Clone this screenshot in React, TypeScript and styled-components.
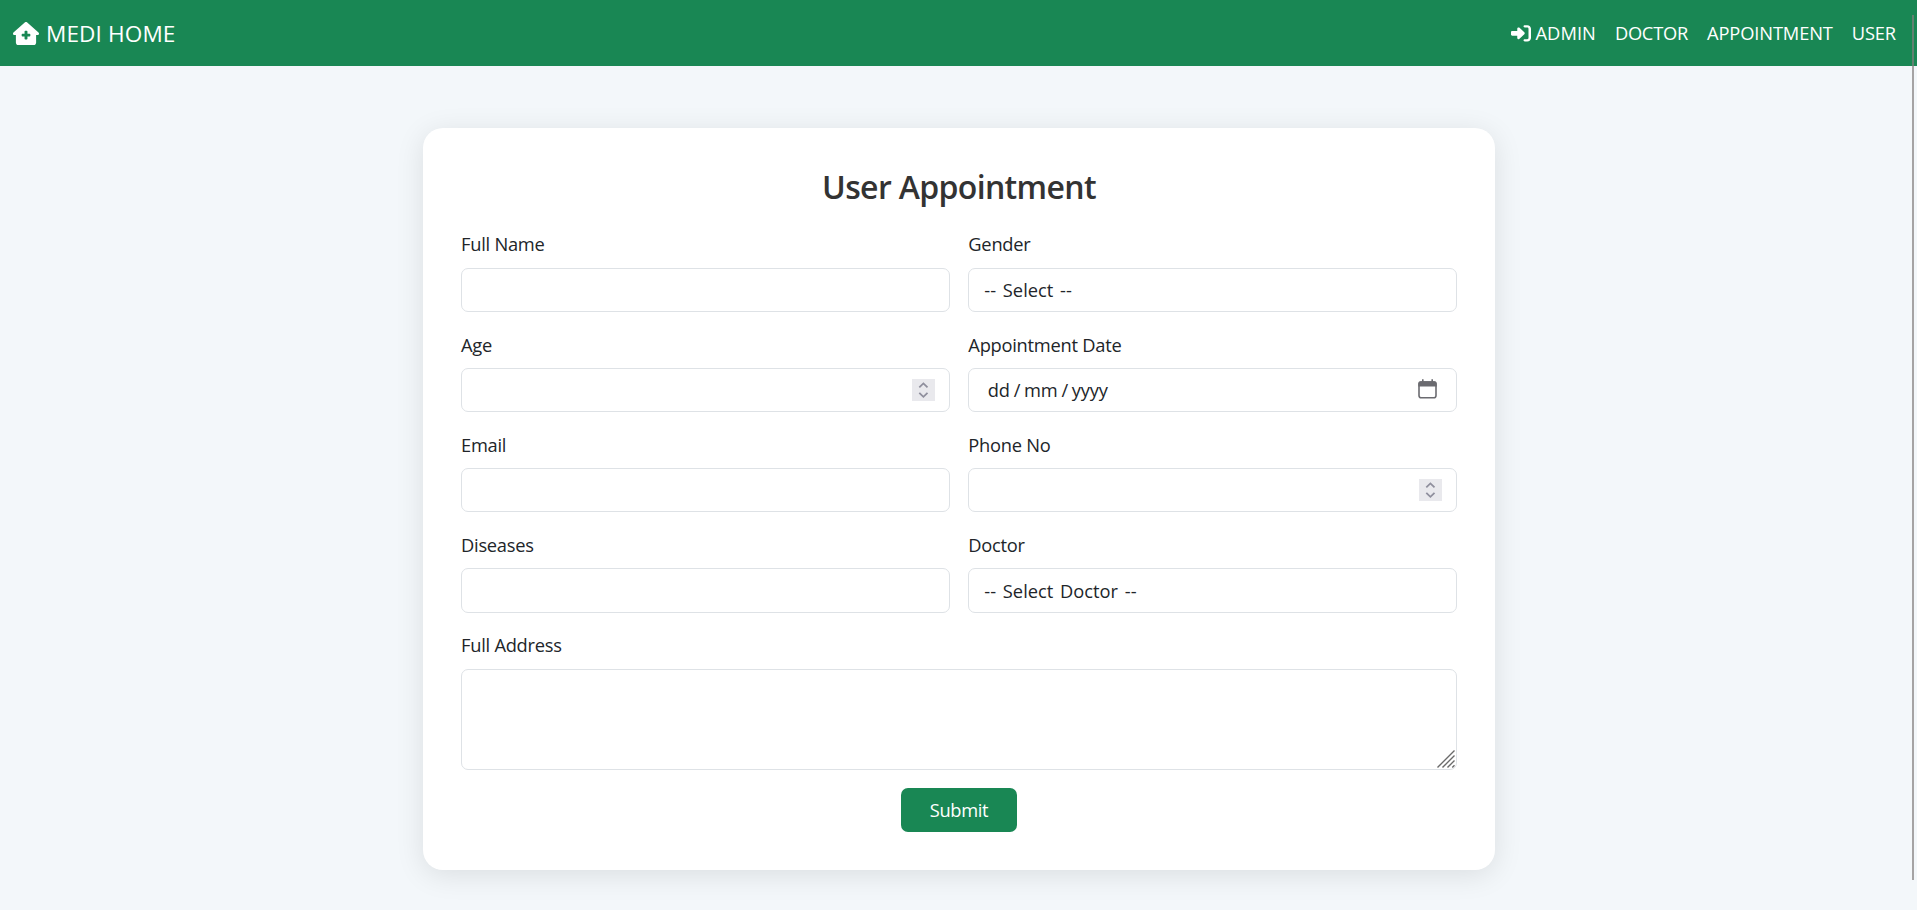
import React from "react";
import styled, { createGlobalStyle } from "styled-components";
import { FaHouseMedical, FaRightToBracket } from "react-icons/fa6";

const GlobalStyle = createGlobalStyle`
  *, *::before, *::after { box-sizing: border-box; }
  html, body { margin: 0; padding: 0; height: 910px; overflow: hidden; }
  body {
    background: #f3f7fa;
    color: #212529;
    font-family: "Open Sans", "Noto Sans", sans-serif;
    font-size: 18.3px;
    line-height: 28px;
  }
`;

const Page = styled.div`
  height: 910px;
  display: flex;
  flex-direction: column;
`;

const Navbar = styled.nav`
  width: 100%;
  height: 66px;
  flex: none;
  display: flex;
  align-items: center;
  justify-content: space-between;
  padding: 0 21px 0 13px;
  background: #198754;
  color: #fff;
`;

const Brand = styled.a`
  display: flex;
  align-items: center;
  gap: 7px;
  padding-top: 1px;
  font-size: 22.6px;
  letter-spacing: 0.1px;
  svg { width: 26px; height: 23.3px; }
`;

const NavLinks = styled.div`
  display: flex;
  gap: 19px;
`;

const NavLink = styled.a<{ $spacing: number }>`
  display: flex;
  align-items: center;
  gap: 5px;
  letter-spacing: ${(p) => p.$spacing}px;
  svg { width: 20px; height: 18.7px; }
`;

const Card = styled.main`
  width: 1072px;
  height: 742px;
  margin: 62px 0 0 423px;
  padding: 37px 38px;
  display: flex;
  flex-direction: column;
  align-items: center;
  background: #fff;
  border-radius: 20px;
  box-shadow: 0 5px 29px rgba(0, 0, 0, 0.1);
`;

const Title = styled.h2`
  margin: 0 0 22.2px;
  font-size: 32px;
  line-height: 43px;
  font-weight: 600;
  letter-spacing: -0.65px;
  color: #333;
`;

const FormGrid = styled.form`
  width: 100%;
  display: grid;
  grid-template-columns: 1fr 1fr;
  gap: 18.67px;
`;

const Field = styled.div<{ $wide?: boolean }>`
  grid-column: ${(p) => (p.$wide ? "1 / -1" : "auto")};
  display: flex;
  flex-direction: column;
`;

const Label = styled.label`
  height: 28px;
  margin-bottom: 9.33px;
  letter-spacing: -0.25px;
`;

const Control = styled.div`
  height: 44.33px;
  display: flex;
  align-items: center;
  padding: 0 15px;
  border: 1px solid #dee2e6;
  border-radius: 7px;
  background: #fff;
`;

const bare = `
  flex: 1;
  min-width: 0;
  padding: 0;
  border: 0;
  outline: 0;
  appearance: none;
  background: transparent;
  color: inherit;
  font: inherit;
`;

const Input = styled.input`${bare}`;

const Select = styled.select`
  ${bare}
  letter-spacing: 0;
  word-spacing: 2px;
`;

const DateParts = styled.div`
  flex: 1;
  display: flex;
  gap: 3.8px;
  padding-left: 3.5px;
  letter-spacing: -0.15px;
`;

const CalendarIcon = styled.svg`
  width: 19px;
  height: 20px;
  margin: 0 4px 2px 0;
`;

const Spinner = styled.svg`
  width: 23px;
  height: 22px;
  margin-right: -1px;
  background: #e9e9ed;
`;

const TextAreaBox = styled.div`
  height: 101px;
  display: flex;
  align-items: flex-end;
  padding: 1px;
  border: 1px solid #dee2e6;
  border-radius: 7px;
`;

const TextArea = styled.textarea`
  ${bare}
  height: 100%;
  resize: none;
`;

const Grip = styled.svg`
  width: 18px;
  height: 18px;
`;

const Submit = styled.button`
  grid-column: 1 / -1;
  justify-self: center;
  width: 116px;
  height: 44px;
  padding: 0;
  border: 0;
  border-radius: 7px;
  background: #198754;
  color: #fff;
  font: inherit;
  letter-spacing: -0.3px;
`;

const ScrollThumb = styled.div`
  position: fixed;
  top: 15px;
  right: 3px;
  width: 2px;
  height: 865px;
  background: rgba(131, 127, 127, 0.7);
`;

function NumberSpinner() {
  return (
    <Spinner viewBox="0 0 23 22" fill="none" stroke="#8f8f9d" strokeWidth="1.8">
      <path d="M7.3 8.3 11.4 4.4 15.5 8.3M7.3 13.9 11.4 17.8 15.5 13.9" />
    </Spinner>
  );
}

function TextField({ id, label, stepper }: { id: string; label: string; stepper?: boolean }) {
  return (
    <Field>
      <Label htmlFor={id}>{label}</Label>
      <Control>
        <Input id={id} />
        {stepper && <NumberSpinner />}
      </Control>
    </Field>
  );
}

function SelectField({ id, label, option }: { id: string; label: string; option: string }) {
  return (
    <Field>
      <Label htmlFor={id}>{label}</Label>
      <Control>
        <Select id={id}><option>{option}</option></Select>
      </Control>
    </Field>
  );
}

export default function App() {
  return (
    <Page>
      <GlobalStyle />
      <Navbar>
        <Brand><FaHouseMedical preserveAspectRatio="none" />MEDI HOME</Brand>
        <NavLinks>
          <NavLink $spacing={0.05}><FaRightToBracket preserveAspectRatio="none" />ADMIN</NavLink>
          <NavLink $spacing={-0.25}>DOCTOR</NavLink>
          <NavLink $spacing={-0.12}>APPOINTMENT</NavLink>
          <NavLink $spacing={-0.15}>USER</NavLink>
        </NavLinks>
      </Navbar>
      <Card>
        <Title>User Appointment</Title>
        <FormGrid>
          <TextField id="name" label="Full Name" />
          <SelectField id="gender" label="Gender" option="-- Select --" />
          <TextField id="age" label="Age" stepper />
          <Field>
            <Label>Appointment Date</Label>
            <Control>
              <DateParts><span>dd</span><span>/</span><span>mm</span><span>/</span><span>yyyy</span></DateParts>
              <CalendarIcon viewBox="0 0 19 20">
                <rect x="1" y="3" width="17" height="15.8" rx="2.3" fill="none" stroke="#6b6b70" strokeWidth="1.6" />
                <path d="M0.3 7.6V4.4Q0.3 2.2 2.5 2.2H4V0.2H5.6V2.2H13.4V0.2H15V2.2H16.5Q18.7 2.2 18.7 4.4V7.6Z" fill="#6b6b70" />
              </CalendarIcon>
            </Control>
          </Field>
          <TextField id="email" label="Email" />
          <TextField id="phone" label="Phone No" stepper />
          <TextField id="diseases" label="Diseases" />
          <SelectField id="doctor" label="Doctor" option="-- Select Doctor --" />
          <Field $wide>
            <Label htmlFor="address">Full Address</Label>
            <TextAreaBox>
              <TextArea id="address" />
              <Grip viewBox="0 0 18 18" stroke="#6a6a6a" strokeWidth="1.4">
                <path d="M0.5 17.5 17.5 0.5M5.5 17.5 17.5 5.5M10.5 17.5 17.5 10.5M15.3 17.5 17.5 15.3" />
              </Grip>
            </TextAreaBox>
          </Field>
          <Submit type="button">Submit</Submit>
        </FormGrid>
      </Card>
      <ScrollThumb />
    </Page>
  );
}
